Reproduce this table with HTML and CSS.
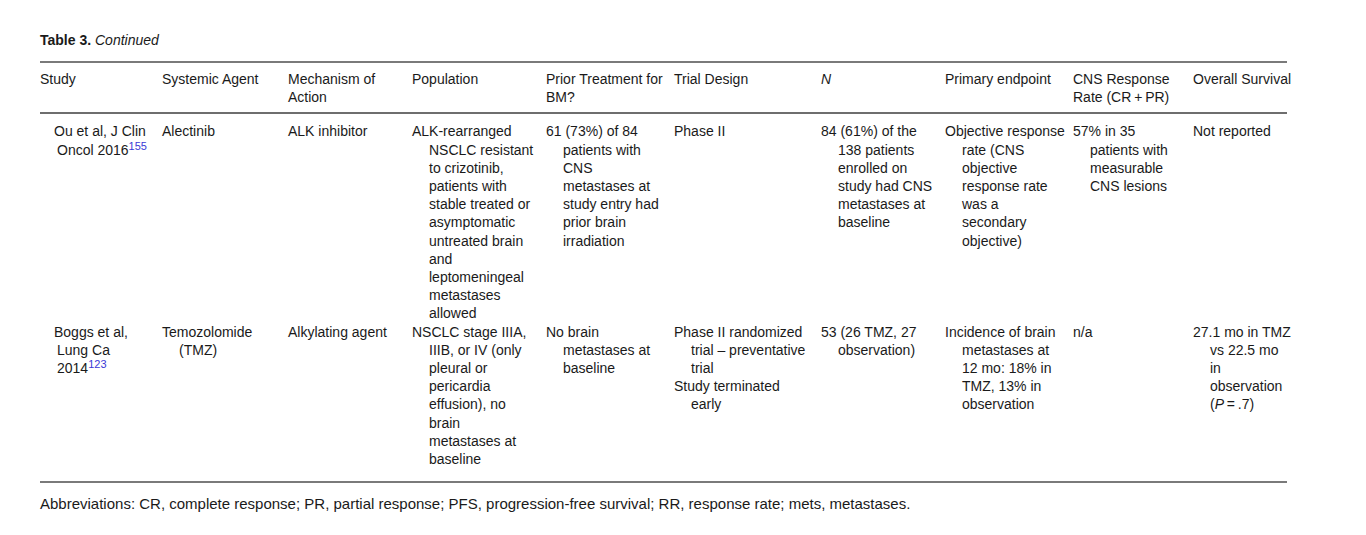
FILE: index.html
```html
<!DOCTYPE html>
<html>
<head>
<meta charset="utf-8">
<link rel="stylesheet" href="styles.css">
</head>
<body>
<div class="page">
  <div class="caption"><b>Table 3.</b> <i>Continued</i></div>
  <table class="tbl">
    <colgroup>
      <col class="c1"><col class="c2"><col class="c3"><col class="c4"><col class="c5">
      <col class="c6"><col class="c7"><col class="c8"><col class="c9"><col class="c10">
    </colgroup>
    <thead>
      <tr>
        <th>Study</th>
        <th>Systemic Agent</th>
        <th>Mechanism of<br>Action</th>
        <th>Population</th>
        <th>Prior Treatment for<br>BM?</th>
        <th>Trial Design</th>
        <th><i>N</i></th>
        <th>Primary endpoint</th>
        <th>CNS Response<br>Rate (CR&#8201;+&#8201;PR)</th>
        <th>Overall Survival</th>
      </tr>
    </thead>
    <tbody>
      <tr class="r1">
        <td class="study">Ou et al, J Clin<br>Oncol 2016<sup class="ref">155</sup></td>
        <td>Alectinib</td>
        <td>ALK inhibitor</td>
        <td>ALK-rearranged<br>NSCLC resistant<br>to crizotinib,<br>patients with<br>stable treated or<br>asymptomatic<br>untreated brain<br>and<br>leptomeningeal<br>metastases<br>allowed</td>
        <td>61 (73%) of 84<br>patients with<br>CNS<br>metastases at<br>study entry had<br>prior brain<br>irradiation</td>
        <td>Phase II</td>
        <td>84 (61%) of the<br>138 patients<br>enrolled on<br>study had CNS<br>metastases at<br>baseline</td>
        <td>Objective response<br>rate (CNS<br>objective<br>response rate<br>was a<br>secondary<br>objective)</td>
        <td>57% in 35<br>patients with<br>measurable<br>CNS lesions</td>
        <td>Not reported</td>
      </tr>
      <tr class="r2">
        <td class="study">Boggs et al,<br>Lung Ca<br>2014<sup class="ref">123</sup></td>
        <td>Temozolomide<br>(TMZ)</td>
        <td>Alkylating agent</td>
        <td>NSCLC stage IIIA,<br>IIIB, or IV (only<br>pleural or<br>pericardia<br>effusion), no<br>brain<br>metastases at<br>baseline</td>
        <td>No brain<br>metastases at<br>baseline</td>
        <td><div>Phase II randomized<br>trial – preventative<br>trial</div><div>Study terminated<br>early</div></td>
        <td>53 (26 TMZ, 27<br>observation)</td>
        <td>Incidence of brain<br>metastases at<br>12 mo: 18% in<br>TMZ, 13% in<br>observation</td>
        <td>n/a</td>
        <td>27.1 mo in TMZ<br>vs 22.5 mo<br>in<br>observation<br>(<i>P</i>&#8201;=&#8201;.7)</td>
      </tr>
    </tbody>
  </table>
  <p class="foot">Abbreviations: CR, complete response; PR, partial response; PFS, progression-free survival; RR, response rate; mets, metastases.</p>
</div>
</body>
</html>
```

FILE: styles.css
```css
html, body {
  margin: 0;
  padding: 0;
  background: #ffffff;
}
.page {
  padding: 31px 0 0 40px;
  width: 1247px;
  font-family: "Liberation Sans", Arial, sans-serif;
  color: #1a1a1a;
}
.caption {
  font-size: 14px;
  line-height: 18px;
  margin-bottom: 12px;
}
.caption b { font-weight: bold; }
.tbl {
  width: 1247px;
  border-collapse: collapse;
  table-layout: fixed;
  font-size: 14px;
  line-height: 18.2px;
  border-top: 2px solid #7a7a7a;
  border-bottom: 2px solid #7a7a7a;
}
.c1 { width: 122px; }
.c2 { width: 126px; }
.c3 { width: 124px; }
.c4 { width: 134px; }
.c5 { width: 128px; }
.c6 { width: 147px; }
.c7 { width: 124px; }
.c8 { width: 128px; }
.c9 { width: 120px; }
.c10 { width: 94px; }
.tbl th {
  font-weight: normal;
  text-align: left;
  vertical-align: top;
  padding: 7px 0 6px 0;
  white-space: nowrap;
}
.tbl thead tr {
  border-bottom: 2px solid #6e6e6e;
}
.tbl td {
  vertical-align: top;
  padding: 0 0 0 17px;
  text-indent: -17px;
  white-space: nowrap;
}
.tbl td div {
  text-indent: -17px;
}
.tbl td.study {
  padding-left: 17px;
  text-indent: -3px;
}
.tbl .r1 td { padding-top: 8px; }
.tbl .r2 td { padding-bottom: 13px; }
.ref {
  color: #3a3ad6;
  font-size: 11px;
  line-height: 0;
  vertical-align: 5px;
}
.foot {
  margin: 12px 0 0 0;
  font-size: 15px;
  line-height: 18px;
}
```
